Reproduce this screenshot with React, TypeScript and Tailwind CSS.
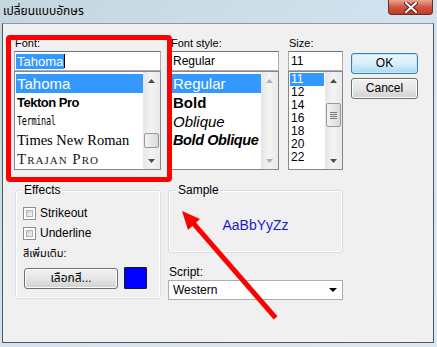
import React from "react";

const ui = '"Liberation Sans", Tahoma, "Noto Sans Thai", "Noto Sans", sans-serif';

function Arrow({ dir, disabled }: { dir: "up" | "down"; disabled?: boolean }) {
  const fill = disabled ? "#b0b0b0" : "#4d4d4d";
  return (
    <div className="h-[17px] flex items-center justify-center">
      <svg width="7" height="4" viewBox="0 0 7 4">
        {dir === "up" ? (
          <path d="M0 4 L3.5 0 L7 4Z" fill={fill} />
        ) : (
          <path d="M0 0 L3.5 4 L7 0Z" fill={fill} />
        )}
      </svg>
    </div>
  );
}

function ScrollBar({
  thumb,
  disabled,
}: {
  thumb?: "font" | "size";
  disabled?: boolean;
}) {
  return (
    <div className="relative w-[17px] h-full flex flex-col justify-between bg-gradient-to-r from-[#e6e6e6] via-[#f3f3f3] to-[#e9e9e9]">
      <Arrow dir="up" disabled={disabled} />
      {thumb === "font" && (
        <div className="absolute left-[1px] top-[61px] w-[15px] h-[15px] rounded-[2px] border border-[#979797] bg-gradient-to-r from-[#f3f3f3] to-[#d9d9d9]" />
      )}
      {thumb === "size" && (
        <div className="absolute left-[1px] top-[31px] w-[15px] h-[24px] rounded-[2px] border border-[#979797] bg-gradient-to-r from-[#f3f3f3] to-[#d9d9d9] flex flex-col items-center justify-center gap-[1px]">
          <div className="w-[7px] h-[1px] bg-[#7a7a7a]" />
          <div className="w-[7px] h-[1px] bg-[#7a7a7a]" />
          <div className="w-[7px] h-[1px] bg-[#7a7a7a]" />
          <div className="w-[7px] h-[1px] bg-[#7a7a7a]" />
        </div>
      )}
      <Arrow dir="down" disabled={disabled} />
    </div>
  );
}

function Label({ children }: { children: React.ReactNode }) {
  return <div className="h-[14px] pl-[1px] text-[11px] leading-[13px] text-black">{children}</div>;
}

function Checkbox({ label }: { label: string }) {
  return (
    <div className="flex items-center gap-[4px] h-[13px]">
      <div className="w-[13px] h-[13px] border border-[#8e8f8f] bg-white p-[2px]">
        <div className="w-full h-full bg-gradient-to-br from-[#cbcfd5] to-[#f6f6f6] border border-[#aeb3b9]" />
      </div>
      <span className="text-[12px] leading-[13px]">{label}</span>
    </div>
  );
}

function Button({ children, def, w }: { children: React.ReactNode; def?: boolean; w: string }) {
  return (
    <div
      className={
        "h-[21px] rounded-[3px] border flex items-center justify-center text-[12px] leading-[13px] " +
        w +
        (def
          ? " border-[#3c7fb1] bg-gradient-to-b from-[#eaf6fd] via-[#d9f0fc] to-[#a7d9f5] shadow-[inset_0_0_0_1px_#c4e5f6]"
          : " border-[#707070] bg-gradient-to-b from-[#f2f2f2] via-[#e6e6e6] to-[#d0d0d0] shadow-[inset_0_0_0_1px_#fcfcfc]")
      }
    >
      {children}
    </div>
  );
}

export default function App() {
  return (
    <div
      className="relative w-[437px] h-[347px] overflow-hidden bg-gradient-to-br from-[#c4d6e0] via-[#d2e3ef] to-[#dbe9f4] flex flex-col"
      style={{ fontFamily: ui }}
    >
      {/* Title bar */}
      <div className="h-[23px] flex items-start justify-between">
        <div className="pl-[3px] pt-[4px] text-[12px] leading-[15px] text-black">เปลี่ยนแบบอักษร</div>
        <div className="mr-[4px] w-[45px] h-[15px] rounded-b-[4px] border border-t-0 border-[#6d2a20] bg-gradient-to-b from-[#e7a597] via-[#d0563f] to-[#c13a23] flex items-center justify-center">
          <svg width="14" height="11" viewBox="0 0 14 11">
            <path d="M2 1 L12 10 M12 1 L2 10" stroke="#5a2017" strokeWidth="4" strokeLinecap="square" />
            <path d="M2 1 L12 10 M12 1 L2 10" stroke="#ffffff" strokeWidth="2" strokeLinecap="square" />
          </svg>
        </div>
      </div>

      {/* Client area */}
      <div className="ml-[2px] w-[432px] h-[320px] border border-[#555] border-t-[#8a9aa6] bg-[#f0f0f0] flex flex-col">
        {/* Row 1 */}
        <div className="flex pt-[13px] pl-[11px]">
          {/* Font */}
          <div className="w-[147px] flex flex-col">
            <Label>Font:</Label>
            <div className="h-[20px] border border-[#abadb3] border-t-[#6e7177] bg-white flex items-center pl-[1px]">
              <span className="bg-[#3399ff] text-white text-[13px] leading-[15px] px-[1px]">Tahoma</span>
              <span className="w-[1px] h-[14px] bg-black" />
            </div>
            <div className="h-[99px] border border-[#828790] bg-white flex">
              <div className="flex-1 pt-[2px] pl-[1px] overflow-hidden flex flex-col">
                <div className="h-[19px] bg-[#3399ff] text-white text-[15px] leading-[19px] pl-[1px]">Tahoma</div>
                <div className="h-[19px] text-[13px] leading-[19px] font-bold pl-[1px] tracking-[-0.5px]" style={{ fontFamily: '"Liberation Sans", sans-serif' }}>
                  Tekton Pro
                </div>
                <div className="h-[19px] flex items-center pl-[1px]">
                  <span className="text-[8.5px] leading-[9px] scale-y-[1.45] origin-left tracking-[-0.3px]" style={{ fontFamily: '"DejaVu Sans Mono", monospace' }}>
                    Terminal
                  </span>
                </div>
                <div className="h-[19px] text-[14.5px] leading-[19px] pl-[1px]" style={{ fontFamily: '"Liberation Serif", serif' }}>
                  Times New Roman
                </div>
                <div className="h-[19px] text-[15px] leading-[19px] pl-[1px] tracking-[1px] text-[#222]" style={{ fontFamily: '"Liberation Serif", serif', fontVariant: "small-caps" }}>
                  Trajan Pro
                </div>
              </div>
              <ScrollBar thumb="font" />
            </div>
          </div>

          {/* Font style */}
          <div className="ml-[9px] w-[109px] flex flex-col">
            <Label>Font style:</Label>
            <div className="h-[20px] border border-[#abadb3] border-t-[#6e7177] bg-white flex items-center pl-[2px] text-[12px] leading-[14px]">
              Regular
            </div>
            <div className="h-[99px] border border-[#828790] bg-white flex">
              <div className="flex-1 pt-[2px] pl-[1px] flex flex-col overflow-hidden">
                <div className="h-[19px] bg-[#3399ff] text-white text-[15px] leading-[19px] pl-[1px]">Regular</div>
                <div className="h-[19px] text-[15px] leading-[19px] font-bold pl-[1px]">Bold</div>
                <div className="h-[19px] text-[15px] leading-[19px] italic pl-[1px]">Oblique</div>
                <div className="h-[19px] text-[14.5px] leading-[19px] font-bold italic pl-[1px] whitespace-nowrap tracking-[-0.4px]">Bold Oblique</div>
              </div>
              <ScrollBar disabled />
            </div>
          </div>

          {/* Size */}
          <div className="ml-[9px] w-[55px] flex flex-col">
            <Label>Size:</Label>
            <div className="h-[20px] border border-[#abadb3] border-t-[#6e7177] bg-white flex items-center pl-[2px] text-[12px] leading-[14px]">
              11
            </div>
            <div className="h-[99px] border border-[#828790] bg-white flex">
              <div className="flex-1 pt-[1px] pl-[1px] pr-[1px] flex flex-col text-[12px] leading-[13px]">
                <div className="h-[13px] bg-[#3399ff] text-white pl-[1px]">11</div>
                <div className="h-[13px] pl-[1px]">12</div>
                <div className="h-[13px] pl-[1px]">14</div>
                <div className="h-[13px] pl-[1px]">16</div>
                <div className="h-[13px] pl-[1px]">18</div>
                <div className="h-[13px] pl-[1px]">20</div>
                <div className="h-[13px] pl-[1px]">22</div>
              </div>
              <ScrollBar thumb="size" />
            </div>
          </div>

          {/* Buttons */}
          <div className="ml-[8px] pt-[16px] flex flex-col gap-[4px]">
            <Button def w="w-[67px]">OK</Button>
            <Button w="w-[67px]">Cancel</Button>
          </div>
        </div>

        {/* Row 2 */}
        <div className="flex mt-[20px] pl-[12px]">
          {/* Effects */}
          <div className="relative w-[146px] h-[109px] rounded-[3px] border border-[#d5dfe5] shadow-[inset_0_0_0_1px_#ffffff] pt-[16px] pl-[7px] flex flex-col">
            <div className="absolute -top-[7px] left-[6px] px-[2px] bg-[#f0f0f0] text-[12px] leading-[13px]">Effects</div>
            <Checkbox label="Strikeout" />
            <div className="mt-[7px]">
              <Checkbox label="Underline" />
            </div>
            <div className="mt-[6px] h-[14px] text-[11px] leading-[14px]">สีเพิ่มเติม:</div>
            <div className="mt-[7px] flex items-center gap-[6px] pl-[1px]">
              <Button w="w-[94px]">เลือกสี...</Button>
              <div className="w-[23px] h-[22px] border border-[#1a1a1a] bg-[#0000ff] rounded-[1px]" />
            </div>
          </div>

          {/* Sample + Script */}
          <div className="ml-[7px] w-[175px] flex flex-col">
            <div className="relative h-[63px] rounded-[3px] border border-[#d5dfe5] shadow-[inset_0_0_0_1px_#ffffff] flex items-center justify-center pt-[6px]">
              <div className="absolute -top-[7px] left-[7px] px-[2px] bg-[#f0f0f0] text-[12px] leading-[13px]">Sample</div>
              <span className="text-[14px] leading-[16px] text-[#1a1acc]">AaBbYyZz</span>
            </div>
            <div className="mt-[12px] h-[14px] pl-[1px] text-[12px] leading-[14px]">Script:</div>
            <div className="mt-[1px] h-[20px] border border-[#abadb3] bg-white flex items-center justify-between pl-[4px] pr-[5px] text-[12px] leading-[14px]">
              <span>Western</span>
              <svg width="8" height="4" viewBox="0 0 8 4">
                <path d="M0 0 L4 4 L8 0Z" fill="#000" />
              </svg>
            </div>
          </div>
        </div>
      </div>

      {/* Annotation: red rectangle */}
      <div className="absolute left-[6px] top-[35px] w-[166px] h-[147px] border-[5px] border-[#ff0000] rounded-[4px] pointer-events-none" />

      {/* Annotation: red arrow */}
      <svg className="absolute left-0 top-0 pointer-events-none" width="437" height="347" viewBox="0 0 437 347">
        <line x1="274" y1="316" x2="194" y2="224" stroke="#ff0000" strokeWidth="5" strokeLinecap="square" />
        <polygon points="182,211 200,219 188,230" fill="#ff0000" />
      </svg>
    </div>
  );
}
